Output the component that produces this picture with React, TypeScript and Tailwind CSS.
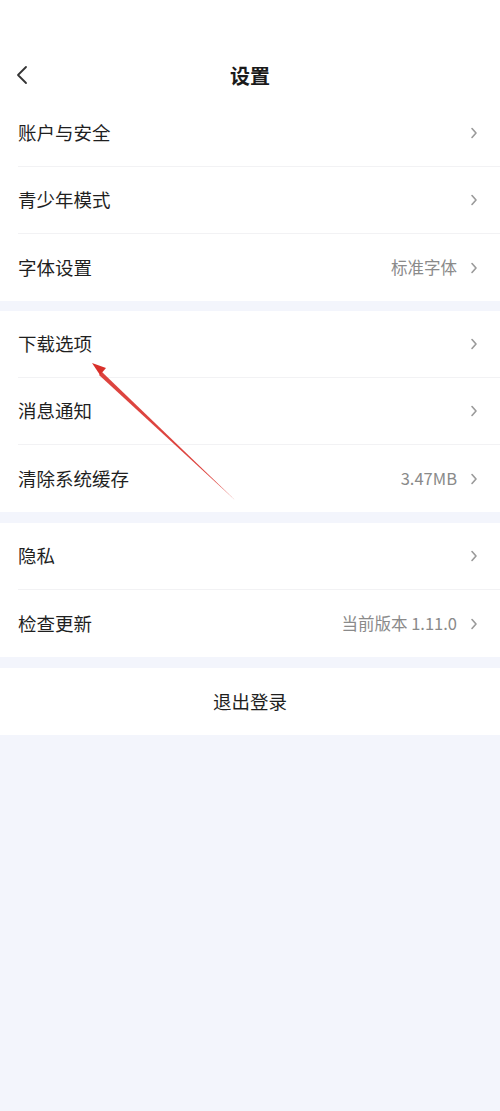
const FONT = { fontFamily: '"Noto Sans CJK SC", "Noto Sans", sans-serif' };

type Row = { label: string; value?: string };

const groups: Row[][] = [
  [{ label: '账户与安全' }, { label: '青少年模式' }, { label: '字体设置', value: '标准字体' }],
  [{ label: '下载选项' }, { label: '消息通知' }, { label: '清除系统缓存', value: '3.47MB' }],
  [{ label: '隐私' }, { label: '检查更新', value: '当前版本 1.11.0' }],
];

function Chevron() {
  return (
    <svg width="8" height="12" viewBox="0 0 8 12" className="ml-[13px]">
      <path d="M2 1.5 L6 6 L2 10.5" fill="none" stroke="#9a9a9a" strokeWidth="1.6" strokeLinecap="round" strokeLinejoin="round" />
    </svg>
  );
}

export default function App() {
  return (
    <div className="relative min-h-[1111px] w-[500px] bg-[#f3f5fc] text-[#222]" style={FONT}>
      {/* Header */}
      <div className="h-[100px] bg-white pt-[52px]">
        <div className="w-full h-[48px] flex items-center justify-center relative">
          <svg width="14" height="20" viewBox="0 0 14 20" className="absolute left-[15px] top-[13px]">
            <path d="M11 2 L3 10 L11 18" fill="none" stroke="#333" strokeWidth="1.8" strokeLinecap="round" strokeLinejoin="round" />
          </svg>
          <span className="text-[20px] font-bold text-[#1a1a1a]">设置</span>
        </div>
      </div>

      {groups.map((rows, gi) => (
        <div key={gi} className={`bg-white ${gi === 1 ? 'mt-[10px]' : gi === 2 ? 'mt-[11px]' : ''}`}>
          {rows.map((row, ri) => (
            <div key={row.label} className="pl-[18px]">
              <div className={`h-[67px] flex items-center pr-[22px] ${ri < rows.length - 1 ? 'border-b border-[#f2f2f4]' : ''}`}>
                <span className="text-[18.5px] flex-1 text-[#1f1f1f]">{row.label}</span>
                {row.value && <span className="text-[16.5px] text-[#8a8a8a]">{row.value}</span>}
                <Chevron />
              </div>
            </div>
          ))}
        </div>
      ))}

      <div className="mt-[11px] bg-white h-[67px] flex items-center justify-center">
        <span className="text-[18.5px] text-[#1f1f1f]">退出登录</span>
      </div>

      {/* Red annotation arrow */}
      <svg className="absolute left-0 top-0 pointer-events-none" width="500" height="600" viewBox="0 0 500 600">
        <polygon points="236,501 102,372 99,375" fill="#d9302a" opacity="0.9" />
        <polygon points="92,363 106,368 100,375" fill="#d9302a" />
      </svg>
    </div>
  );
}
